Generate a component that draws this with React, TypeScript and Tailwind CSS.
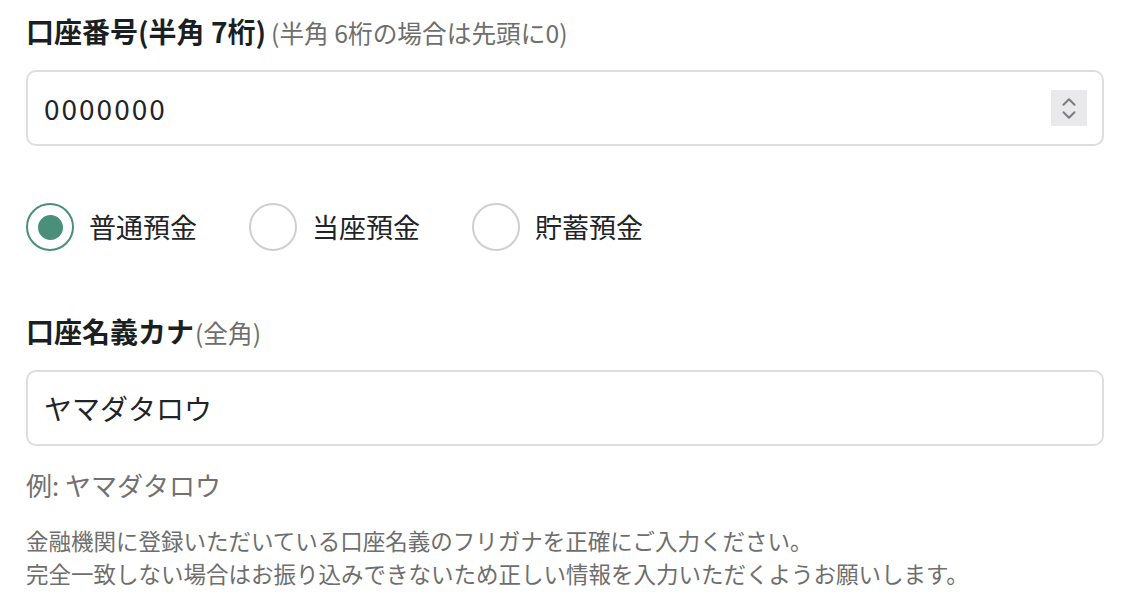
import React from "react";

const font = { fontFamily: '"Noto Sans CJK JP", "Noto Sans", sans-serif' };

function Radio({ label, checked }: { label: string; checked?: boolean }) {
  return (
    <label className="flex items-center gap-[15px]">
      <span
        className={
          checked
            ? "flex h-[48px] w-[48px] items-center justify-center rounded-full border-2 border-[#4a8f78] bg-white"
            : "flex h-[48px] w-[48px] items-center justify-center rounded-full border-2 border-[#cfcfcf] bg-white"
        }
      >
        {checked && <span className="h-[25px] w-[25px] rounded-full bg-[#4a8f78]" />}
      </span>
      <span className="text-[27px] leading-[36px] text-[#1f2428]">{label}</span>
    </label>
  );
}

export default function App() {
  return (
    <div className="min-h-[604px] w-[1134px] bg-white" style={font}>
      <div className="w-[1078px] ml-[26px] pt-[13px] flex flex-col">
        <div className="flex items-baseline leading-[36px]">
          <span className="text-[28px] font-bold text-[#1a1f24]">口座番号(半角 7桁)</span>
          <span className="ml-[5px] text-[24.7px] text-[#6e6e6e]">(半角 6桁の場合は先頭に0)</span>
        </div>
        <div className="mt-[20px] flex h-[76px] items-center justify-between rounded-[10px] border-2 border-[#dedede] pl-[16px] pr-[15px]">
          <span className="text-[28px] tracking-[2px] text-[#1f2428]">0000000</span>
          <span className="flex h-[36px] w-[36px] flex-col items-center justify-center gap-[5px] bg-[#e9e9ec]">
            <svg width="14" height="8" viewBox="0 0 14 8" fill="none">
              <path d="M1.5 6.8 L7 1.3 L12.5 6.8" stroke="#7b7b84" strokeWidth="2" strokeLinecap="round" strokeLinejoin="round" />
            </svg>
            <svg width="14" height="8" viewBox="0 0 14 8" fill="none">
              <path d="M1.5 1.2 L7 6.7 L12.5 1.2" stroke="#7b7b84" strokeWidth="2" strokeLinecap="round" strokeLinejoin="round" />
            </svg>
          </span>
        </div>
        <div className="mt-[57px] flex items-center gap-[52px]">
          <Radio label="普通預金" checked />
          <Radio label="当座預金" />
          <Radio label="貯蓄預金" />
        </div>
        <div className="mt-[62px] flex items-baseline leading-[36px]">
          <span className="text-[28px] font-bold text-[#1a1f24]">口座名義カナ</span>
          <span className="ml-[1px] text-[24.7px] text-[#6e6e6e]">(全角)</span>
        </div>
        <div className="mt-[20px] flex h-[76px] items-center rounded-[10px] border-2 border-[#dedede] pl-[16px]">
          <span className="text-[28px] text-[#1f2428]">ヤマダタロウ</span>
        </div>
        <div className="mt-[21px] text-[26px] leading-[36px] text-[#717171]">例: ヤマダタロウ</div>
        <div className="mt-[21px] text-[22.5px] leading-[33px] text-[#6e6e6e]">
          <p>金融機関に登録いただいている口座名義のフリガナを正確にご入力ください。</p>
          <p>完全一致しない場合はお振り込みできないため正しい情報を入力いただくようお願いします。</p>
        </div>
      </div>
    </div>
  );
}
